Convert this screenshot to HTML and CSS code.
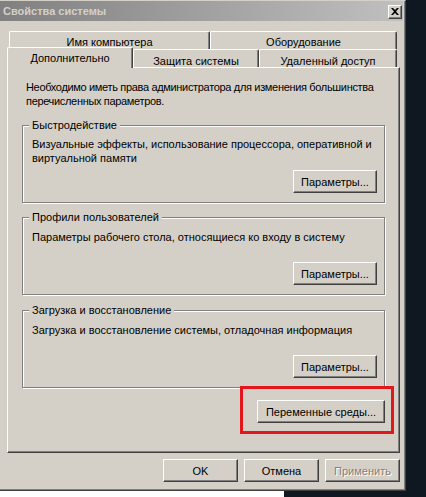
FILE: index.html
```html
<!DOCTYPE html>
<html lang="ru">
<head>
<meta charset="utf-8">
<title>Свойства системы</title>
<link rel="stylesheet" href="styles.css">
</head>
<body>
<div class="screen">
  <div class="window">
    <div class="titlebar">
      <span class="title">Свойства системы</span>
      <span class="close">
        <svg width="8" height="7" viewBox="0 0 8 7"><path d="M0 0h2l2 2 2-2h2L5 3.5 8 7H6L4 5 2 7H0l3-3.5z" fill="#000"/></svg>
      </span>
    </div>
    <div class="client">
      <div class="tabs">
        <div class="tabrow">
          <div class="tab w1">Имя компьютера</div>
          <div class="tab w2">Оборудование</div>
        </div>
        <div class="tabrow lower">
          <div class="tab w3 active">Дополнительно</div>
          <div class="tab w4">Защита системы</div>
          <div class="tab w5">Удаленный доступ</div>
        </div>
      </div>
      <div class="panel">
        <p class="note">Необходимо иметь права администратора для изменения большинства перечисленных параметров.</p>

        <div class="group g1">
          <span class="legend">Быстродействие</span>
          <p class="gtext">Визуальные эффекты, использование процессора, оперативной и виртуальной памяти</p>
          <div class="brow"><button class="btn param">Параметры...</button></div>
        </div>

        <div class="group g2">
          <span class="legend">Профили пользователей</span>
          <p class="gtext">Параметры рабочего стола, относящиеся ко входу в систему</p>
          <div class="brow"><button class="btn param">Параметры...</button></div>
        </div>

        <div class="group g3">
          <span class="legend">Загрузка и восстановление</span>
          <p class="gtext">Загрузка и восстановление системы, отладочная информация</p>
          <div class="brow"><button class="btn param">Параметры...</button></div>
        </div>

        <div class="envrow">
          <div class="highlight"><button class="btn env">Переменные среды...</button></div>
        </div>
      </div>
      <div class="dlgbuttons">
        <button class="btn dlg">OK</button>
        <button class="btn dlg">Отмена</button>
        <button class="btn dlg disabled">Применить</button>
      </div>
    </div>
  </div>
  <div class="below"></div>
</div>
</body>
</html>
```
FILE: styles.css
```css
* { box-sizing: border-box; }

body {
  margin: 0;
  width: 426px;
  height: 497px;
  overflow: hidden;
  background: #0f1820;
  font-family: "Liberation Sans", Arial, sans-serif;
  font-size: 11px;
  line-height: 14px;
  color: #000;
}

.screen {
  display: flex;
  flex-direction: column;
  width: 426px;
  height: 497px;
}

.window {
  width: 406px;
  height: 491px;
  background: #d4d0c8;
  border-top: 1px solid #d4d0c8;
  border-right: 1px solid #404040;
  border-bottom: 1px solid #404040;
  box-shadow: inset -1px -1px 0 #808080;
  display: flex;
  flex-direction: column;
}

.below {
  width: 284px;
  height: 6px;
  background: #ffffff;
}

.titlebar {
  height: 20px;
  margin-right: 2px;
  background: linear-gradient(to right, #808080, #c0c0c0);
  display: flex;
  align-items: flex-start;
  justify-content: space-between;
}

.title {
  color: #d4d0c8;
  font-weight: bold;
  font-size: 11px;
  line-height: 14px;
  padding: 3px 0 0 3px;
}

.close {
  width: 14px;
  height: 14px;
  margin: 4px 1px 0 0;
  background: #d4d0c8;
  border-top: 1px solid #fff;
  border-left: 1px solid #fff;
  border-right: 1px solid #404040;
  border-bottom: 1px solid #404040;
  box-shadow: inset -1px -1px 0 #808080;
  display: flex;
  align-items: center;
  justify-content: center;
}
.close svg { display: block; margin: 0 0 1px 0; }

.client {
  padding: 10px 5px 0 7px;
  display: flex;
  flex-direction: column;
}

.tabs {
  margin: 0 3px 0 2px;
}

.tabrow {
  display: flex;
  height: 18px;
}

.tab {
  height: 18px;
  text-align: center;
  padding-top: 3px;
  background: #d4d0c8;
  border-top: 1px solid #fff;
  border-left: 1px solid #fff;
  border-right: 1px solid #404040;
  box-shadow: inset -1px 0 0 #808080;
  border-radius: 2px 2px 0 0;
}

.w1 { width: 201px; }
.w2 { width: 187px; }
.w3 { width: 122px; }
.w4 { width: 128px; padding-top: 4px; }
.w5 { width: 138px; padding-top: 4px; }

.tab.active {
  position: relative;
  z-index: 2;
  height: 21px;
  margin: -2px -2px -1px -2px;
  width: 126px;
  padding-top: 3px;
}
.tab.active + .tab { margin-left: 2px; width: 126px; }

.panel {
  position: relative;
  width: 393px;
  height: 386px;
  background: #d4d0c8;
  border-top: 1px solid #fff;
  border-left: 1px solid #fff;
  border-right: 1px solid #404040;
  border-bottom: 1px solid #404040;
  box-shadow: inset -1px -1px 0 #808080;
  padding: 12px 14px 0 14px;
  display: flex;
  flex-direction: column;
}

.note {
  margin: 0 -10px 0 4px;
  letter-spacing: -0.33px;
}

.group {
  position: relative;
  border: 1px solid #808080;
  box-shadow: 1px 1px 0 #fff, inset 1px 1px 0 #fff;
  padding: 11px 7px 9px 9px;
}
.g1 { margin-top: 17px; }
.g2 { margin-top: 14px; padding-top: 12px; }
.g3 { margin-top: 15px; padding-top: 12px; }

.legend {
  position: absolute;
  top: -8px;
  left: 6px;
  padding: 0 3px;
  background: #d4d0c8;
  white-space: nowrap;
}

.gtext { margin: 0; }

.brow {
  display: flex;
  justify-content: flex-end;
  margin-top: 5px;
}
.g2 .brow, .g3 .brow { margin-top: 18px; }

.btn {
  font-family: "Liberation Sans", Arial, sans-serif;
  font-size: 11px;
  line-height: 14px;
  color: #000;
  background: #d4d0c8;
  height: 23px;
  padding: 0;
  border-top: 1px solid #fff;
  border-left: 1px solid #fff;
  border-right: 1px solid #404040;
  border-bottom: 1px solid #404040;
  box-shadow: inset -1px -1px 0 #808080;
  border-radius: 0;
}
.param { width: 84px; }
.env { width: 128px; }
.dlg { width: 75px; }
.disabled { color: #808080; text-shadow: 1px 1px 0 #fff; }

.envrow {
  display: flex;
  justify-content: flex-end;
  margin-top: 12px;
}

.highlight {
  position: relative;
  display: flex;
}
.highlight::after {
  content: "";
  position: absolute;
  top: -14px;
  left: -17px;
  right: -9px;
  bottom: -11px;
  border: 3px solid #e3161b;
}

.dlgbuttons {
  display: flex;
  justify-content: flex-end;
  gap: 6px;
  margin-top: 6px;
  width: 393px;
}
```
